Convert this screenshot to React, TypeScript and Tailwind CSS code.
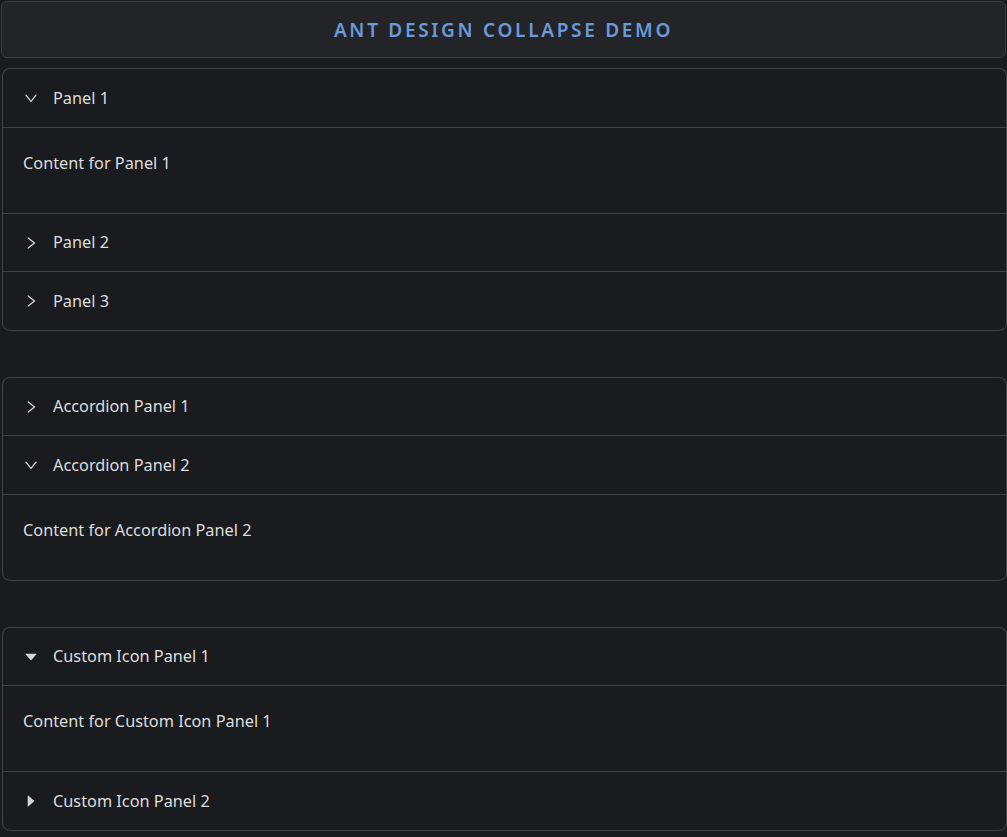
import React from "react";

const Chevron = ({ open }: { open: boolean }) => (
  <svg
    viewBox="64 64 896 896"
    width="14"
    height="14"
    fill="currentColor"
    className={open ? "rotate-90" : ""}
  >
    <path d="M765.7 486.8L314.9 134.7A7.97 7.97 0 00302 141v77.3c0 4.9 2.3 9.6 6.1 12.6l360 281.1-360 281.1c-3.9 3-6.1 7.7-6.1 12.6V883c0 6.6 7.6 10.3 12.9 6.3l450.8-352.1a31.96 31.96 0 000-50.4z" />
  </svg>
);

const Caret = ({ open }: { open: boolean }) => (
  <svg
    viewBox="64 64 896 896"
    width="14"
    height="14"
    fill="currentColor"
    className={open ? "rotate-90" : ""}
  >
    <path d="M715.8 493.5L335 165.1c-14.2-12.2-35-1.2-35 18.5v656.8c0 19.7 20.8 30.7 35 18.5l380.8-328.4c10.9-9.4 10.9-27.6 0-37z" />
  </svg>
);

type Item = { title: string; open: boolean; content?: string };

const Collapse = ({ items, caret }: { items: Item[]; caret?: boolean }) => (
  <div className="ml-[1px] mr-[-1px] rounded-lg border border-[#424347] border-b-0 overflow-hidden">
    {items.map((it, i) => (
      <div
        key={i}
        className={`border-b border-[#424347] ${i === items.length - 1 ? "rounded-b-lg" : ""}`}
      >
        <div className="flex items-center h-[57.5px] pl-[21px] pt-[1px] text-[#dedede]">
          <span className="w-[14px] flex items-center justify-center text-[#d4d4d4]">
            {caret ? <Caret open={it.open} /> : <Chevron open={it.open} />}
          </span>
          <span className="ml-[15px] text-[16.3px] leading-[25px]">{it.title}</span>
        </div>
        {it.open && (
          <div className="border-t border-[#424347] pl-5 pt-[23px] pb-[37px] text-[16.3px] leading-[25px] text-[#dedede]">
            {it.content}
          </div>
        )}
      </div>
    ))}
  </div>
);

export default function App() {
  return (
    <div
      className="min-h-[837px] bg-[#1a1b1e] p-[1px] overflow-hidden"
      style={{ fontFamily: '"Segoe UI", "Noto Sans", "Open Sans", sans-serif' }}
    >
      <div className="h-[57px] rounded-md border border-[#3b3d40] bg-[#232427] flex items-center justify-center pt-[2px]">
        <h1 className="text-[19px] font-semibold tracking-[2.7px] text-[#6a9ad8] uppercase">
          Ant Design Collapse Demo
        </h1>
      </div>
      <div className="mt-[10px] flex flex-col gap-[46px]">
        <Collapse
          items={[
            { title: "Panel 1", open: true, content: "Content for Panel 1" },
            { title: "Panel 2", open: false },
            { title: "Panel 3", open: false },
          ]}
        />
        <Collapse
          items={[
            { title: "Accordion Panel 1", open: false },
            { title: "Accordion Panel 2", open: true, content: "Content for Accordion Panel 2" },
          ]}
        />
        <Collapse
          caret
          items={[
            { title: "Custom Icon Panel 1", open: true, content: "Content for Custom Icon Panel 1" },
            { title: "Custom Icon Panel 2", open: false },
          ]}
        />
      </div>
    </div>
  );
}
